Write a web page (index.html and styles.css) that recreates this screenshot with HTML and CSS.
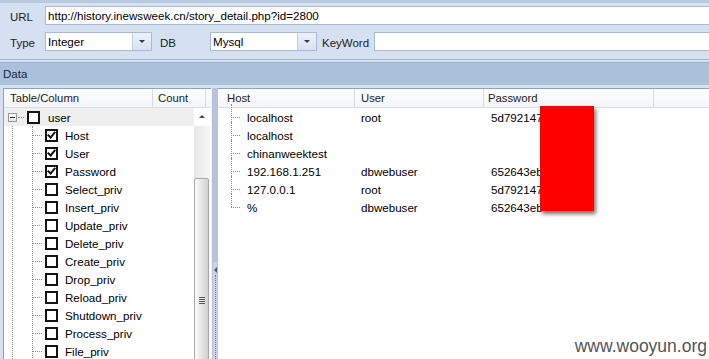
FILE: index.html
```html
<!DOCTYPE html>
<html>
<head>
  <meta charset="UTF-8">
  <title>Data</title>
  <link rel="stylesheet" href="styles.css">
</head>
<body>
  <div class="window">
    <div class="toolbar">
      <div class="row">
        <label class="label url-label">URL</label>
        <div class="field url-field">http://history.inewsweek.cn/story_detail.php?id=2800</div>
      </div>
      <div class="row">
        <label class="label type-label">Type</label>
        <div class="combo">
          <span class="combo-text">Integer</span>
          <span class="combo-btn"><span class="arrow"></span></span>
        </div>
        <label class="label db-label">DB</label>
        <div class="combo">
          <span class="combo-text">Mysql</span>
          <span class="combo-btn"><span class="arrow"></span></span>
        </div>
        <label class="label kw-label">KeyWord</label>
        <div class="field kw-field"></div>
      </div>
    </div>

    <div class="data-bar">Data</div>

    <div class="main">
      <div class="tree-panel">
        <div class="grid-head">
          <div class="col col-name">Table/Column</div>
          <div class="col col-count">Count</div>
        </div>
        <div class="tree-body">
          <div class="tree">
            <div class="node root">
              <span class="expander"></span>
              <span class="stub"></span>
              <span class="check"></span>
              <span class="name">user</span>
            </div>
            <div class="children">
              <div class="node"><span class="branch"></span><span class="check checked"></span><span class="name">Host</span></div>
              <div class="node"><span class="branch"></span><span class="check checked"></span><span class="name">User</span></div>
              <div class="node"><span class="branch"></span><span class="check checked"></span><span class="name">Password</span></div>
              <div class="node"><span class="branch"></span><span class="check"></span><span class="name">Select_priv</span></div>
              <div class="node"><span class="branch"></span><span class="check"></span><span class="name">Insert_priv</span></div>
              <div class="node"><span class="branch"></span><span class="check"></span><span class="name">Update_priv</span></div>
              <div class="node"><span class="branch"></span><span class="check"></span><span class="name">Delete_priv</span></div>
              <div class="node"><span class="branch"></span><span class="check"></span><span class="name">Create_priv</span></div>
              <div class="node"><span class="branch"></span><span class="check"></span><span class="name">Drop_priv</span></div>
              <div class="node"><span class="branch"></span><span class="check"></span><span class="name">Reload_priv</span></div>
              <div class="node"><span class="branch"></span><span class="check"></span><span class="name">Shutdown_priv</span></div>
              <div class="node"><span class="branch"></span><span class="check"></span><span class="name">Process_priv</span></div>
              <div class="node"><span class="branch"></span><span class="check"></span><span class="name">File_priv</span></div>
            </div>
          </div>
          <div class="scrollbar">
            <div class="scroll-up"></div>
            <div class="scroll-thumb"><span class="grip"></span></div>
          </div>
        </div>
      </div>

      <div class="splitter">
        <div class="split-handle"><span class="split-arrow"></span></div>
      </div>

      <div class="result-panel">
        <div class="grid-head">
          <div class="col col-host">Host</div>
          <div class="col col-user">User</div>
          <div class="col col-pass">Password</div>
          <div class="col col-rest"></div>
        </div>
        <div class="rows">
          <div class="res-row"><span class="res-branch"></span><span class="cell c-host">localhost</span><span class="cell c-user">root</span><span class="cell c-pass">5d792147</span></div>
          <div class="res-row"><span class="res-branch"></span><span class="cell c-host">localhost</span><span class="cell c-user"></span><span class="cell c-pass"></span></div>
          <div class="res-row"><span class="res-branch"></span><span class="cell c-host">chinanweektest</span><span class="cell c-user"></span><span class="cell c-pass"></span></div>
          <div class="res-row"><span class="res-branch"></span><span class="cell c-host">192.168.1.251</span><span class="cell c-user">dbwebuser</span><span class="cell c-pass">652643eb</span></div>
          <div class="res-row"><span class="res-branch"></span><span class="cell c-host">127.0.0.1</span><span class="cell c-user">root</span><span class="cell c-pass">5d792147</span></div>
          <div class="res-row last"><span class="res-branch"></span><span class="cell c-host">%</span><span class="cell c-user">dbwebuser</span><span class="cell c-pass">652643eb</span></div>
        </div>
        <div class="redact"></div>
      </div>
    </div>

    <div class="watermark">www.wooyun.org</div>
  </div>
</body>
</html>
```

FILE: styles.css
```css
body {
  margin: 0;
  font-family: "Liberation Sans", Arial, sans-serif;
  font-size: 11.3px;
  color: #000;
  background-color: #ffffff;
}

.window {
  position: relative;
  width: 709px;
  height: 359px;
  overflow: hidden;
  background-color: #d5e1f1;
}

/* top parameter area */
.toolbar {
  background-color: #d5e1f1;
  border-top: 3px solid #b9cae0;
  padding-top: 3px;
  height: 60px;
  box-sizing: border-box;
  border-bottom: 1px solid #a3b6d0;
}

.row {
  display: flex;
  align-items: center;
  height: 19px;
  margin-bottom: 7px;
}

.label {
  font-size: 11.5px;
  color: #1b1b1b;
  padding-top: 3px;
}

.url-label { width: 35px; padding-left: 10px; }
.type-label { width: 35px; padding-left: 10px; }
.db-label { width: 50px; padding-left: 8px; }
.kw-label { width: 52px; padding-left: 5px; }

.field {
  height: 19px;
  box-sizing: border-box;
  background-color: #ffffff;
  border: 1px solid #a9bad3;
  border-right: none;
  padding: 2px 2px;
  font-size: 11.6px;
  line-height: 14px;
}

.url-field { flex: 1; }
.kw-field { flex: 1; }

.combo {
  display: flex;
  width: 107px;
  height: 19px;
  box-sizing: border-box;
  border: 1px solid #a9bad3;
  background-color: #ffffff;
}

.combo-text {
  flex: 1;
  padding: 2px 2px;
  font-size: 11.6px;
  line-height: 14px;
}

.combo-btn {
  width: 18px;
  border-left: 1px solid #c2cfe2;
  background: linear-gradient(#edf2f9, #d7e2f1);
  display: flex;
  align-items: center;
  justify-content: center;
}

.arrow {
  width: 0;
  height: 0;
  border-left: 3px solid transparent;
  border-right: 3px solid transparent;
  border-top: 3px solid #2b3b55;
}

.data-bar {
  margin-top: 2px;
  border-top: 1px solid #9cb0cb;
  height: 22px;
  background-color: #abc1da;
  padding-left: 3px;
  line-height: 22px;
  color: #16253d;
  font-size: 11.5px;
}

/* panels */
.main {
  display: flex;
  height: 280px;
  padding-top: 3px;
  box-sizing: border-box;
}

.tree-panel {
  width: 207px;
  margin-left: 3px;
  background-color: #ffffff;
  border-left: 1px solid #8fa3c0;
  border-top: 1px solid #8fa3c0;
  display: flex;
  flex-direction: column;
}

.grid-head {
  display: flex;
  height: 19px;
  box-sizing: border-box;
  background: linear-gradient(#ffffff, #f3f5f8);
  border-bottom: 1px solid #d9dee6;
  color: #222;
}

.col {
  line-height: 18px;
  padding-left: 6px;
  border-right: 1px solid #d5dbe4;
  box-sizing: border-box;
  white-space: nowrap;
}

.col-name { width: 149px; }
.col-count { width: 53px; padding-left: 5px; }

.tree-body {
  flex: 1;
  display: flex;
}

.tree {
  flex: 1;
  position: relative;
}

.tree::before {
  content: "";
  position: absolute;
  left: 8px;
  top: 13px;
  bottom: 0;
  border-left: 1px dotted #8a8a8a;
}

.node {
  display: flex;
  align-items: center;
  height: 18px;
  position: relative;
}

.node.root {
  background-color: #efefef;
}

.expander {
  width: 7px;
  height: 7px;
  border: 1px solid #9a9a9a;
  background: linear-gradient(#ffffff, #e4e4e4);
  margin-left: 4px;
  position: relative;
  z-index: 1;
}

.expander::after {
  content: "";
  position: absolute;
  left: 1px;
  top: 3px;
  width: 5px;
  height: 1px;
  background-color: #333;
}

.stub {
  width: 6px;
  margin-left: 1px;
  border-top: 1px dotted #8a8a8a;
}

.root .check {
  margin-left: 3px;
}

.check {
  width: 9px;
  height: 9px;
  border: 2px solid #141414;
  background-color: #ffffff;
  position: relative;
}

.check.checked::after {
  content: "";
  position: absolute;
  left: 2px;
  top: -1px;
  width: 3px;
  height: 6px;
  border-right: 2px solid #111;
  border-bottom: 2px solid #111;
  transform: rotate(40deg);
}

.name {
  padding-left: 7px;
  font-size: 11.6px;
}

.root .name {
  padding-left: 8px;
}

.children {
  position: relative;
}

.children::before {
  content: "";
  position: absolute;
  left: 28px;
  top: 0;
  bottom: -20px;
  border-left: 1px dotted #8a8a8a;
}

.branch {
  width: 10px;
  margin-left: 28px;
  margin-right: 3px;
  border-top: 1px dotted #8a8a8a;
}

.scrollbar {
  width: 16px;
  margin-right: 1px;
  position: relative;
  background: linear-gradient(90deg, #e6e6e6, #f7f7f7);
}

.scroll-up {
  height: 18px;
  background-color: #ffffff;
  position: relative;
}

.scroll-up::after {
  content: "";
  position: absolute;
  left: 5px;
  top: 7px;
  border-left: 3px solid transparent;
  border-right: 3px solid transparent;
  border-bottom: 3px solid #444;
}

.scroll-thumb {
  position: absolute;
  left: 0;
  top: 70px;
  width: 15px;
  height: 200px;
  box-sizing: border-box;
  border: 1px solid #a8a8a8;
  border-radius: 2px;
  background: linear-gradient(90deg, #fbfbfb, #e2e2e2 60%, #d1d1d1);
}

.grip {
  position: absolute;
  left: 4px;
  top: 118px;
  width: 6px;
  height: 7px;
  background: repeating-linear-gradient(#5a5a5a 0 1px, transparent 1px 2px);
}

.splitter {
  width: 6px;
  background-color: #b6c3d8;
  border-left: 1px solid #eef2f8;
  display: flex;
  flex-direction: column;
  justify-content: flex-end;
}

.split-handle {
  height: 103px;
  margin: 0 1px;
  background-color: #c9d3e3;
  position: relative;
}

.split-arrow {
  position: absolute;
  left: 1px;
  top: 5px;
  border-top: 3px solid transparent;
  border-bottom: 3px solid transparent;
  border-right: 3px solid #3c5a8a;
}

.split-handle::after {
  content: "";
  position: absolute;
  left: 2px;
  top: 13px;
  bottom: 0;
  border-left: 1px dotted #6b7fa3;
}

.result-panel {
  flex: 1;
  background-color: #ffffff;
  border-top: 1px solid #8fa3c0;
  position: relative;
}

.col-host { width: 137px; padding-left: 9px; }
.col-user { width: 129px; }
.col-pass { width: 170px; padding-left: 4px; }
.col-rest { flex: 1; border-right: none; }

.res-row {
  display: flex;
  align-items: center;
  height: 18px;
  font-size: 11.6px;
  position: relative;
}

.res-branch {
  width: 9px;
  margin-left: 13px;
  border-top: 1px dotted #8a8a8a;
  margin-right: 7px;
}

.res-row::before {
  content: "";
  position: absolute;
  left: 13px;
  top: -4px;
  height: 18px;
  border-left: 1px dotted #8a8a8a;
}

.res-row.last::before {
  height: 13px;
}

.cell { white-space: nowrap; }
.c-host { width: 114px; }
.c-user { width: 130px; }
.c-pass { width: 80px; }

.redact {
  position: absolute;
  left: 322px;
  top: 17px;
  width: 54px;
  height: 105px;
  background-color: #ff0000;
  box-shadow: 2px 3px 4px rgba(0, 0, 0, 0.55);
}

.watermark {
  position: absolute;
  right: 2px;
  bottom: 2px;
  font-family: "Liberation Sans", Arial, sans-serif;
  font-size: 17.5px;
  color: #555555;
}
```
